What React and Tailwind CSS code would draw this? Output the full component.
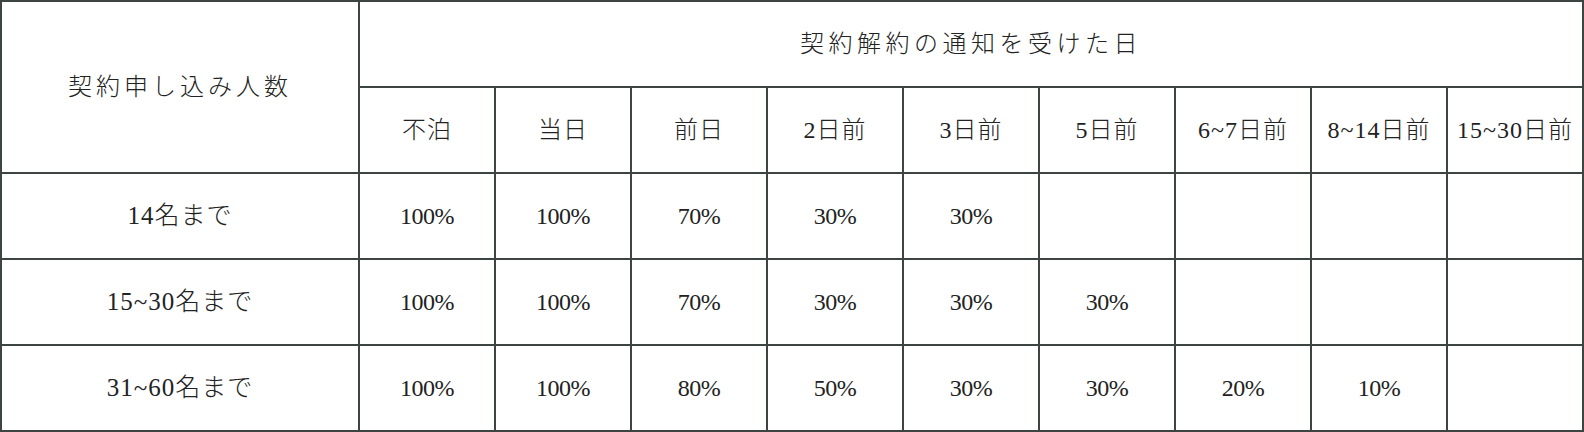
import React from "react";

const cols = ["不泊", "当日", "前日", "2日前", "3日前", "5日前", "6~7日前", "8~14日前", "15~30日前"];
const rows = [
  { label: "14名まで", vals: ["100%", "100%", "70%", "30%", "30%", "", "", "", ""] },
  { label: "15~30名まで", vals: ["100%", "100%", "70%", "30%", "30%", "30%", "", "", ""] },
  { label: "31~60名まで", vals: ["100%", "100%", "80%", "50%", "30%", "30%", "20%", "10%", ""] },
];

const cell = "border-2 border-[#3d4541] text-center align-middle p-0";

export default function App() {
  return (
    <div className="w-[1584px] h-[432px] bg-white overflow-hidden font-['Liberation_Serif','Noto_Sans_CJK_JP',serif] text-[#222]">
      <table className="w-[1584px] table-fixed border-collapse">
        <colgroup>
          <col className="w-[358px]" />
          {cols.map((c) => (
            <col key={c} className="w-[136px]" />
          ))}
        </colgroup>
        <tbody>
          <tr className="h-[86px]">
            <td rowSpan={2} className={`${cell} text-[24px] tracking-[4px] font-light`}>
              契約申し込み人数
            </td>
            <td colSpan={9} className={`${cell} text-[24px] tracking-[4.5px] font-light`}>
              契約解約の通知を受けた日
            </td>
          </tr>
          <tr className="h-[86px]">
            {cols.map((c) => (
              <td key={c} className={`${cell} text-[24px] tracking-[1px] font-light whitespace-nowrap`}>
                {c}
              </td>
            ))}
          </tr>
          {rows.map((r) => (
            <tr key={r.label} className="h-[86px]">
              <td className={`${cell} text-[25px] tracking-[1px] font-light`}>{r.label}</td>
              {r.vals.map((v, i) => (
                <td key={i} className={`${cell} text-[24px] tracking-[-0.5px]`}>
                  {v}
                </td>
              ))}
            </tr>
          ))}
        </tbody>
      </table>
    </div>
  );
}
